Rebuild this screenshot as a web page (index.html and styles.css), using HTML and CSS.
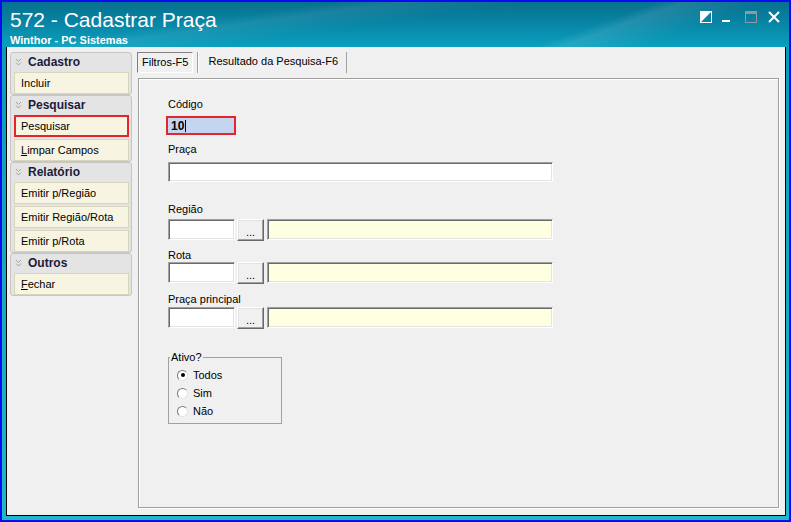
FILE: index.html
```html
<!DOCTYPE html>
<html lang="pt-BR">

<head>
    <meta charset="UTF-8">
    <meta name="viewport" content="width=device-width, initial-scale=1.0">
    <title>572 - Cadastrar Praça</title>
    <link rel="stylesheet" href="styles.css">
</head>

<body>

    <div class="window">
        <div class="titlebar">
            <div class="titles">
                <div class="title">572 - Cadastrar Praça</div>
                <div class="subtitle">Winthor - PC Sistemas</div>
            </div>
            <div class="controls">
                <svg class="ctl ctl-theme" width="12" height="12" viewBox="0 0 12 12">
                    <rect x="0.5" y="0.5" width="11" height="11" fill="none" stroke="#fff" />
                    <polygon points="0,0 12,0 0,12" fill="#fff" />
                </svg>
                <svg class="ctl ctl-min" width="8" height="12" viewBox="0 0 8 12">
                    <rect x="0" y="9" width="8" height="2" fill="#fff" />
                </svg>
                <svg class="ctl ctl-max" width="12" height="12" viewBox="0 0 12 12">
                    <rect x="0.5" y="0.5" width="11" height="11" fill="none" stroke="#8f9aa0" />
                    <rect x="0" y="0" width="12" height="3" fill="#8f9aa0" />
                </svg>
                <svg class="ctl ctl-close" width="12" height="12" viewBox="0 0 12 12">
                    <path d="M1 1 L11 11 M11 1 L1 11" stroke="#fff" stroke-width="2" />
                </svg>
            </div>
        </div>

        <div class="client">
            <div class="sidebar">
                <div class="group">
                    <div class="group-head">
                        <svg class="chev" width="7" height="8" viewBox="0 0 7 8"><path d="M1 1 L3.5 3.5 L6 1 M1 4.5 L3.5 7 L6 4.5" fill="none" stroke="#a2a2a2" /></svg>
                        Cadastro
                    </div>
                    <div class="action">Incluir</div>
                </div>
                <div class="group">
                    <div class="group-head">
                        <svg class="chev" width="7" height="8" viewBox="0 0 7 8"><path d="M1 1 L3.5 3.5 L6 1 M1 4.5 L3.5 7 L6 4.5" fill="none" stroke="#a2a2a2" /></svg>
                        Pesquisar
                    </div>
                    <div class="action selected">Pesquisar</div>
                    <div class="action"><u>L</u>impar Campos</div>
                </div>
                <div class="group">
                    <div class="group-head">
                        <svg class="chev" width="7" height="8" viewBox="0 0 7 8"><path d="M1 1 L3.5 3.5 L6 1 M1 4.5 L3.5 7 L6 4.5" fill="none" stroke="#a2a2a2" /></svg>
                        Relatório
                    </div>
                    <div class="action">Emitir p/Região</div>
                    <div class="action">Emitir Região/Rota</div>
                    <div class="action">Emitir p/Rota</div>
                </div>
                <div class="group">
                    <div class="group-head">
                        <svg class="chev" width="7" height="8" viewBox="0 0 7 8"><path d="M1 1 L3.5 3.5 L6 1 M1 4.5 L3.5 7 L6 4.5" fill="none" stroke="#a2a2a2" /></svg>
                        Outros
                    </div>
                    <div class="action"><u>F</u>echar</div>
                </div>
            </div>

            <div class="main">
                <div class="tabs">
                    <div class="tab active">Filtros-F5</div>
                    <div class="tab">Resultado da Pesquisa-F6</div>
                </div>
                <div class="page">
                    <div class="lbl lbl-codigo">Código</div>
                    <div class="input-code"><b>10</b><span class="caret"></span></div>

                    <div class="lbl lbl-praca">Praça</div>
                    <div class="input input-praca"></div>

                    <div class="lbl lbl-regiao">Região</div>
                    <div class="row row-regiao">
                        <div class="input short"></div>
                        <div class="dots">...</div>
                        <div class="input long"></div>
                    </div>

                    <div class="lbl lbl-rota">Rota</div>
                    <div class="row row-rota">
                        <div class="input short"></div>
                        <div class="dots">...</div>
                        <div class="input long"></div>
                    </div>

                    <div class="lbl lbl-principal">Praça principal</div>
                    <div class="row row-principal">
                        <div class="input short"></div>
                        <div class="dots">...</div>
                        <div class="input long"></div>
                    </div>

                    <fieldset class="ativo">
                        <legend>Ativo?</legend>
                        <div class="radio-row"><span class="radio checked"></span>Todos</div>
                        <div class="radio-row"><span class="radio"></span>Sim</div>
                        <div class="radio-row"><span class="radio"></span>Não</div>
                    </fieldset>
                </div>
            </div>
        </div>
    </div>

</body>

</html>
```

FILE: styles.css
```css
* {
    box-sizing: border-box;
}

body {
    margin: 0;
    font-family: "Liberation Sans", Arial, sans-serif;
    font-size: 11px;
    color: #000;
}

/* window frame */
.window {
    width: 791px;
    height: 522px;
    border: 2px solid #0b0bf2;
    padding: 0 3px 4px 4px;
    display: flex;
    flex-direction: column;
    background: linear-gradient(to bottom, #07789b 0, #0a9bbb 45px, #1bb9c9 100%);
}

.titlebar {
    height: 45px;
    flex: none;
    display: flex;
    justify-content: space-between;
    align-items: flex-start;
    margin: 0 -3px 0 -4px;
    padding: 6px 9px 0 8px;
    color: #fff;
    background:
        linear-gradient(160deg, rgba(255, 255, 255, 0) 72%, rgba(255, 255, 255, 0.10) 75%, rgba(255, 255, 255, 0) 84%),
        linear-gradient(172deg, rgba(255, 255, 255, 0) 30%, rgba(255, 255, 255, 0.07) 36%, rgba(255, 255, 255, 0) 48%),
        linear-gradient(to bottom, #08708f 0, #0884a4 45%, #0aa0bf 100%);
}

.title {
    font-size: 21px;
    line-height: 24px;
}

.subtitle {
    font-size: 11px;
    font-weight: bold;
    line-height: 13px;
    margin-top: 2px;
}

.controls {
    display: flex;
    margin-top: 3px;
}

.ctl {
    display: block;
}

.ctl-theme {
    margin-right: 10px;
}

.ctl-min {
    margin-right: 15px;
}

.ctl-max {
    margin-right: 11px;
}

/* client area */
.client {
    flex: 1;
    display: flex;
    min-height: 0;
    background: #f0f0f0;
    border: 1px solid #000;
    border-top: none;
}

.sidebar {
    width: 122px;
    flex: none;
    margin: 5px 0 0 3px;
}

.group {
    border: 1px solid #c6c6c6;
    border-radius: 3px;
    background: #e4e4e4;
    padding: 0 2px 0 3px;
}

.group-head {
    height: 17px;
    display: flex;
    align-items: center;
    font-size: 12px;
    font-weight: bold;
    color: #1b1b3a;
}

.chev {
    margin: 0 6px 0 1px;
}

.action {
    height: 22px;
    margin-top: 2px;
    background: #f7f5e2;
    border: 1px solid #d9d5bb;
    padding-left: 6px;
    line-height: 20px;
    white-space: nowrap;
}

.action.selected {
    border: 2px solid #e3262b;
    padding-left: 5px;
    line-height: 18px;
}

/* tabs */
.main {
    flex: 1;
    min-width: 0;
    display: flex;
    flex-direction: column;
    margin-left: 5px;
}

.tabs {
    display: flex;
    height: 21px;
    margin-top: 5px;
}

.tab {
    line-height: 19px;
    padding: 0 8px 0 10px;
    margin-left: 4px;
    border-left: 1px solid #a0a0a0;
    border-right: 1px solid #a0a0a0;
    box-shadow: inset 1px 0 0 #fff;
    white-space: nowrap;
}

.tab.active {
    margin-left: 0;
    padding: 0 4px;
    border: 1px solid;
    border-color: #808080 #fff #fff #808080;
    box-shadow: none;
}

.page {
    flex: 1;
    margin: 5px 6px 7px 1px;
    border: 1px solid #a0a0a0;
    box-shadow: 1px 1px 0 #fff, inset 1px 1px 0 #fff;
    padding: 19px 0 0 29px;
}

/* form */
.lbl {
    height: 13px;
    line-height: 13px;
    white-space: nowrap;
}

.input-code {
    width: 70px;
    height: 19px;
    margin: 5px 0 0 -2px;
    border: 2px solid #e3262b;
    background: #c5d4ef;
    padding-left: 3px;
    display: flex;
    align-items: center;
    font-size: 12px;
}

.caret {
    width: 1px;
    height: 12px;
    background: #000;
    margin-left: 1px;
}

.input {
    height: 20px;
    background: #fff;
    border: 1px solid;
    border-color: #a0a0a0 #fff #fff #a0a0a0;
    box-shadow: inset 1px 1px 0 #6b6b6b, inset -1px -1px 0 #e3e3e3;
}

.lbl-praca {
    margin-top: 8px;
}

.input-praca {
    width: 385px;
    margin-top: 6px;
}

.lbl-regiao {
    margin-top: 21px;
}

.row {
    display: flex;
    height: 21px;
}

.row .input {
    height: 21px;
}

.row-regiao {
    margin-top: 3px;
}

.lbl-rota {
    margin-top: 9px;
}

.lbl-principal {
    margin-top: 10px;
}

.row-principal {
    margin-top: 1px;
}

.short {
    width: 67px;
}

.dots {
    width: 27px;
    height: 22px;
    margin-left: 2px;
    border: 1px solid;
    border-color: #fff #696969 #696969 #fff;
    box-shadow: inset -1px -1px 0 #a0a0a0, inset 1px 1px 0 #e3e3e3;
    background: #f0f0f0;
    text-align: center;
    line-height: 24px;
}

.long {
    width: 286px;
    margin-left: 3px;
    background: #ffffe1;
}

.ativo {
    width: 114px;
    margin: 23px 0 0 0;
    padding: 3px 0 3px 1px;
    border: 1px solid #a0a0a0;
    min-inline-size: 0;
}

.ativo legend {
    padding: 0 1px;
    line-height: 12px;
    font-size: 11px;
}

.radio-row {
    display: flex;
    align-items: center;
    height: 18px;
    padding-left: 7px;
    gap: 5px;
}

.radio {
    width: 11px;
    height: 11px;
    border-radius: 50%;
    border: 1px solid;
    border-color: #7a7a7a #e3e3e3 #e3e3e3 #7a7a7a;
    background: #fff;
    display: flex;
    align-items: center;
    justify-content: center;
}

.radio.checked::after {
    content: "";
    width: 4px;
    height: 4px;
    border-radius: 50%;
    background: #000;
}
```
